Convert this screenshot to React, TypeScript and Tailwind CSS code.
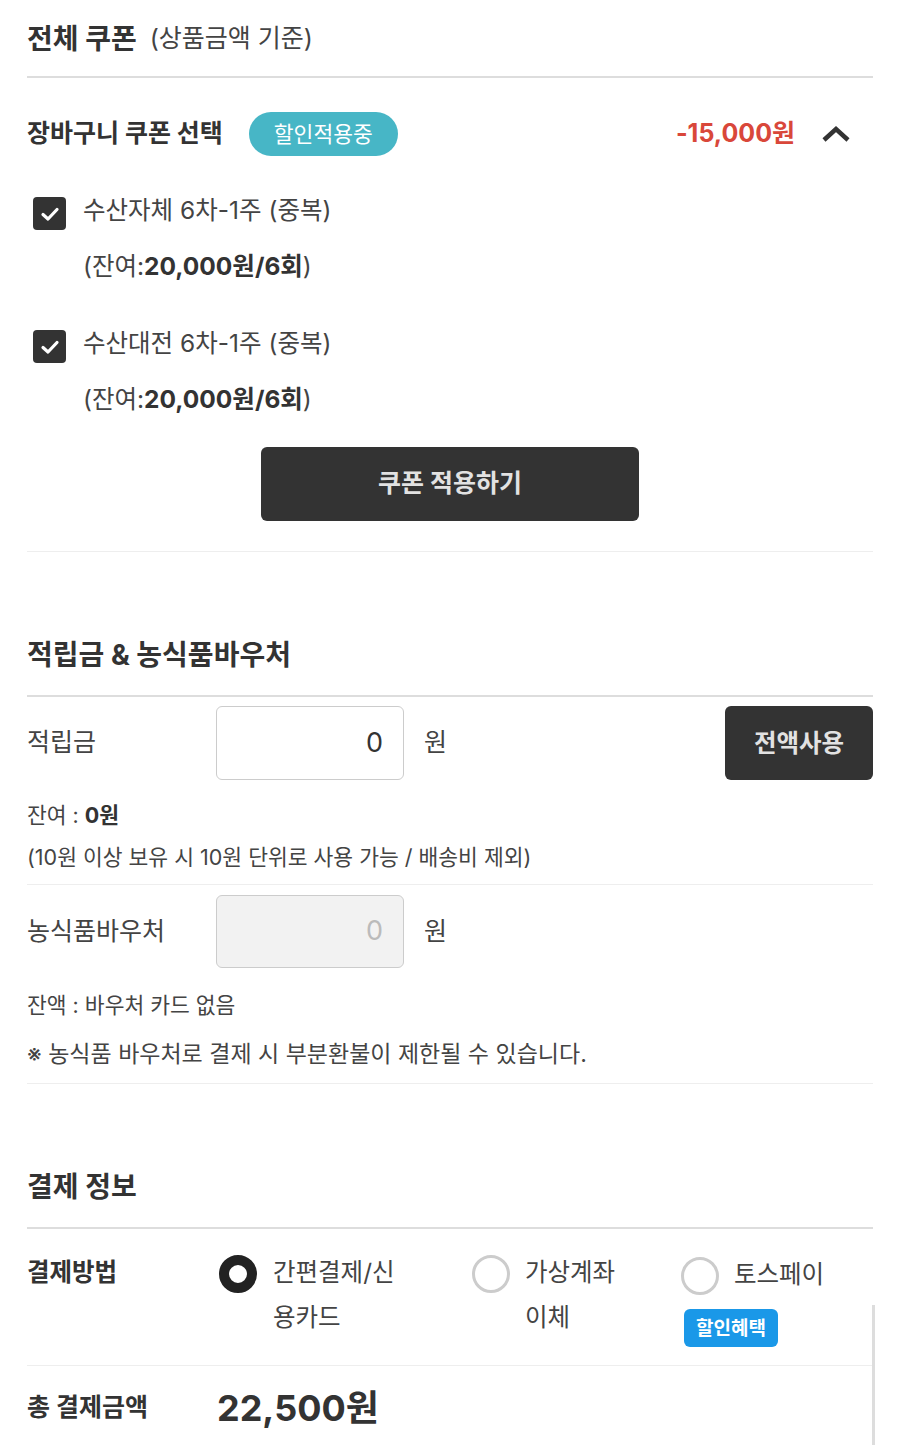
import React from 'react';

const FONT = "font-['Inter','Noto_Sans_CJK_KR',sans-serif]";

function CheckBox() {
  return (
    <div className="ml-[6px] mt-[15px] flex h-[33px] w-[33px] shrink-0 items-center justify-center rounded-[4px] bg-[#333]">
      <svg width="20" height="16" viewBox="0 0 20 16" fill="none">
        <polyline points="3,8.5 8,13 17,3.5" stroke="#fff" strokeWidth="3.2" strokeLinecap="round" strokeLinejoin="round" />
      </svg>
    </div>
  );
}

function CouponItem({ name, className = '' }: { name: string; className?: string }) {
  return (
    <div className={`flex ${className}`}>
      <CheckBox />
      <div className="ml-[17px] text-[24.5px] leading-[56px] text-[#444]">
        <div>{name}</div>
        <div>
          (잔여:<span className="font-bold text-[#333]">20,000원/6회</span>)
        </div>
      </div>
    </div>
  );
}

function Radio({ checked }: { checked?: boolean }) {
  return checked ? (
    <div className="mt-[5px] h-[38px] w-[38px] shrink-0 rounded-full border-[10px] border-[#222] bg-white" />
  ) : (
    <div className="mt-[5px] h-[38px] w-[38px] shrink-0 rounded-full border-[3px] border-[#ccc] bg-white" />
  );
}

export default function App() {
  return (
    <div className={`relative min-h-[1445px] w-[900px] bg-white px-[27px] pt-[2px] ${FONT}`}>
      {/* 전체 쿠폰 */}
      <div className="flex h-[76px] items-center border-b-2 border-[#ddd]">
        <span className="text-[28px] font-bold text-[#333]">전체 쿠폰</span>
        <span className="ml-[13px] text-[25px] text-[#444]">(상품금액 기준)</span>
      </div>

      <div className="mt-[34px] flex h-[44px] items-center">
        <span className="text-[25px] font-bold text-[#333]">장바구니 쿠폰 선택</span>
        <span className="ml-[26px] flex h-[44px] items-center rounded-full bg-[#47b6c6] px-[25px] text-[21.5px] text-white">
          할인적용중
        </span>
        <span className="ml-auto text-[25px] font-bold text-[#d9473a]">-15,000원</span>
        <svg className="ml-[26px] mr-[22px]" width="30" height="18" viewBox="0 0 30 18" fill="none">
          <polyline points="3,15 15,4 27,15" stroke="#333" strokeWidth="4.5" strokeLinejoin="miter" />
        </svg>
      </div>

      <CouponItem name="수산자체 6차-1주 (중복)" className="mt-[26px]" />
      <CouponItem name="수산대전 6차-1주 (중복)" className="mt-[21px]" />

      <button className="mx-auto mt-[20px] flex h-[74px] w-[378px] items-center justify-center rounded-[6px] bg-[#333] text-[25px] font-bold text-[#e2e2e2]">
        쿠폰 적용하기
      </button>
      <div className="mt-[30px] border-b border-[#eee]" />

      {/* 적립금 & 농식품바우처 */}
      <div className="border-b-2 border-[#ddd] pb-[20px] pt-[83px]">
        <div className="h-[40px] text-[28px] font-bold leading-[40px] text-[#333]">적립금 &amp; 농식품바우처</div>
      </div>

      <div className="mt-[9px] flex h-[74px] items-center">
        <span className="w-[189px] text-[25px] text-[#444]">적립금</span>
        <div className="flex h-[74px] w-[188px] items-center justify-end rounded-[6px] border border-[#ccc] pr-[20px] text-[27px] text-[#333]">
          0
        </div>
        <span className="ml-[20px] text-[25px] text-[#444]">원</span>
        <button className="ml-auto flex h-[74px] w-[148px] items-center justify-center rounded-[6px] bg-[#333] text-[24.5px] font-bold text-[#e2e2e2]">
          전액사용
        </button>
      </div>
      <div className="mt-[14px] border-b border-[#eee] pb-[6px] text-[21.5px] leading-[42px] text-[#444]">
        <div>
          잔여 : <span className="font-bold text-[#333]">0원</span>
        </div>
        <div>(10원 이상 보유 시 10원 단위로 사용 가능 / 배송비 제외)</div>
      </div>

      <div className="mt-[10px] flex h-[73px] items-center">
        <span className="w-[189px] text-[25px] text-[#444]">농식품바우처</span>
        <div className="flex h-[73px] w-[188px] items-center justify-end rounded-[6px] border border-[#ccc] bg-[#f2f2f2] pr-[20px] text-[27px] text-[#bbb]">
          0
        </div>
        <span className="ml-[20px] text-[25px] text-[#444]">원</span>
      </div>
      <div className="mt-[16px] border-b border-[#eee] pb-[8px] text-[#444]">
        <div className="text-[21.5px] leading-[42px]">잔액 : 바우처 카드 없음</div>
        <div className="mt-[7px] text-[23px] leading-[42px]">※ 농식품 바우처로 결제 시 부분환불이 제한될 수 있습니다.</div>
      </div>

      {/* 결제 정보 */}
      <div className="border-b-2 border-[#ddd] pb-[20px] pt-[83px]">
        <div className="h-[40px] text-[28px] font-bold leading-[40px] text-[#333]">결제 정보</div>
      </div>

      <div className="flex border-b border-[#eee] pb-[18px] pt-[21px] text-[24.5px] leading-[45px]">
        <span className="w-[192px] font-bold text-[#333]">결제방법</span>
        <div className="flex w-[253px]">
          <Radio checked />
          <div className="ml-[16px] text-[#444]">
            <div>간편결제/신</div>
            <div>용카드</div>
          </div>
        </div>
        <div className="flex w-[209px]">
          <Radio />
          <div className="ml-[15px] text-[#444]">
            <div>가상계좌</div>
            <div>이체</div>
          </div>
        </div>
        <div className="flex flex-col">
          <div className="flex">
            <div className="mt-[2px]">
              <Radio />
            </div>
            <div className="ml-[15px] mt-[2px] text-[#444]">토스페이</div>
          </div>
          <span className="ml-[3px] mt-[12px] flex h-[38px] w-[94px] items-center justify-center rounded-[6px] bg-[#1a98e8] text-[19px] font-bold text-white">
            할인혜택
          </span>
        </div>
      </div>

      <div className="flex h-[84px] items-center">
        <span className="w-[190px] text-[25px] font-bold text-[#333]">총 결제금액</span>
        <span className="text-[36px] font-bold text-[#333]">22,500원</span>
      </div>

      {/* scrollbar */}
      <div className="absolute left-[872px] top-[1305px] h-[140px] w-[3px] bg-[#ddd]" />
    </div>
  );
}
